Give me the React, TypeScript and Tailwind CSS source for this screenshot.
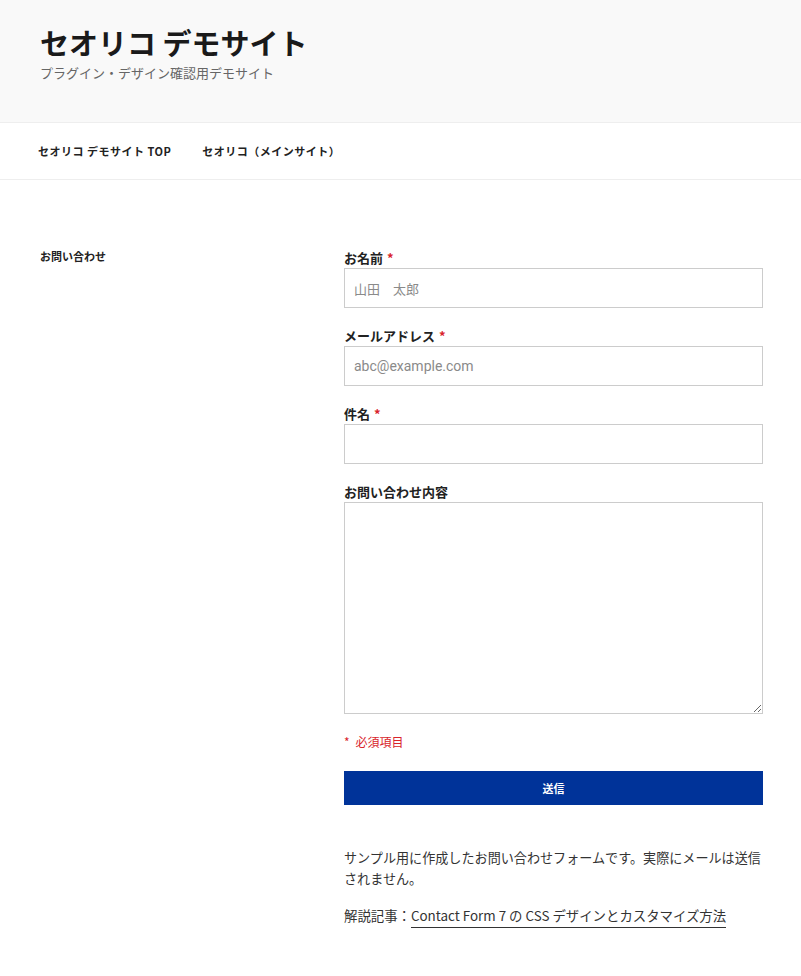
const font = "font-['Noto_Sans_CJK_JP',sans-serif]";

function Req() {
  return <span className="ml-[4px] text-[#d9242b]">*</span>;
}

function Field({
  label,
  required,
  placeholder,
  en,
}: {
  label: string;
  required?: boolean;
  placeholder?: string;
  en?: boolean;
}) {
  return (
    <div className="mb-[17px]">
      <div className="text-[13px] font-bold leading-[21px] text-[#222]">
        {label}
        {required && <Req />}
      </div>
      <input
        placeholder={placeholder}
        className={
          "block h-[40px] w-full border border-[#ccc] bg-white px-[9px] outline-none placeholder:text-[#8a8a8a] " +
          (en ? "font-['Roboto',sans-serif] text-[14px]" : "text-[13px]")
        }
      />
    </div>
  );
}

export default function App() {
  return (
    <div className={`${font} min-h-[976px] bg-white text-[#222]`}>
      <header className="border-b border-[#eee] bg-[#f9f9f9] px-[40px] pb-[39px] pt-[25px]">
        <h1 className="text-[29px] font-bold leading-[34px] text-[#1a1a1a]">
          セオリコ デモサイト
        </h1>
        <p className="mt-[4px] text-[13px] leading-[20px] text-[#666]">
          プラグイン・デザイン確認用デモサイト
        </p>
      </header>

      <nav className="flex h-[57px] items-center gap-[31px] border-b border-[#eee] px-[38px] text-[11px] font-bold tracking-[0.5px] text-[#222]">
        <a>セオリコ デモサイト TOP</a>
        <a>セオリコ（メインサイト）</a>
      </nav>

      <main className="flex pt-[67px]">
        <div className="w-[344px] shrink-0 pl-[40px] text-[11px] font-bold leading-[18px]">
          お問い合わせ
        </div>

        <div className="w-[419px]">
          <Field label="お名前" required placeholder="山田　太郎" />
          <Field label="メールアドレス" required placeholder="abc@example.com" en />
          <Field label="件名" required />

          <div>
            <div className="text-[13px] font-bold leading-[21px]">お問い合わせ内容</div>
            <textarea className="block h-[212px] w-full resize-y border border-[#ccc] bg-white outline-none" />
          </div>

          <p className="mt-[19px] text-[12px] leading-[18px] text-[#d9242b]">
            <span className="mr-[6px]">*</span>必須項目
          </p>

          <button className="mt-[20px] h-[34px] w-full bg-[#003399] text-[11px] font-bold text-white">
            送信
          </button>

          <p className="mt-[42px] w-[440px] whitespace-nowrap text-[13.1px] leading-[21px] text-[#333]">
            サンプル用に作成したお問い合わせフォームです。実際にメールは送信
            <br />
            されません。
          </p>
          <p className="mt-[16px] text-[13.4px] leading-[21px] text-[#333]">
            解説記事：
            <a className="border-b border-[#333] pb-[2px]">
              Contact Form 7 の CSS デザインとカスタマイズ方法
            </a>
          </p>
        </div>
      </main>
    </div>
  );
}
